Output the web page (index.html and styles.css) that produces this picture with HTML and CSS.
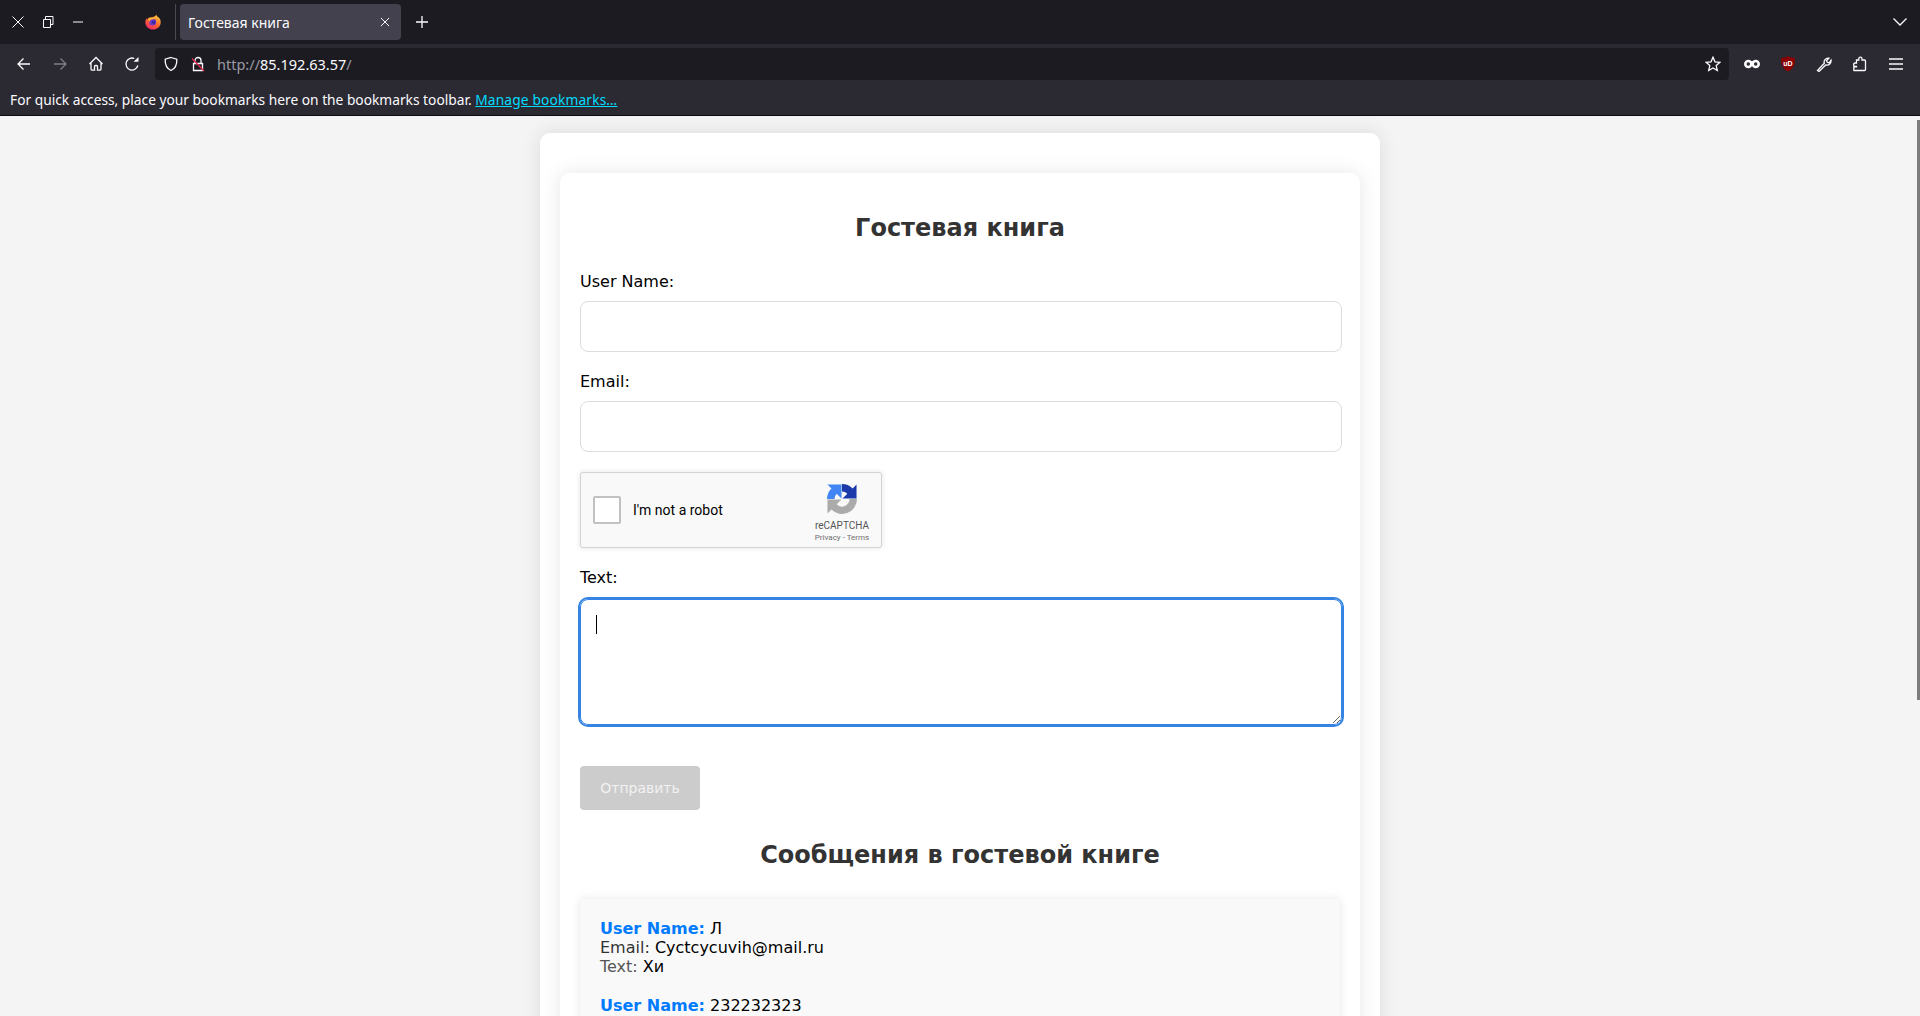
FILE: index.html
```html
<!DOCTYPE html>
<html lang="en">
<head>
  <meta charset="UTF-8">
  <meta name="viewport" content="width=device-width, initial-scale=1.0">
  <title>Гостевая книга</title>
  <link rel="stylesheet" href="styles.css">
</head>
<body>

<!-- browser chrome -->
<div class="tabbar">
  <div class="win-buttons">
    <svg class="icon" viewBox="0 0 16 16"><path d="M2.500 2.500l11 11M13.500 2.500l-11 11"/></svg>
    <svg class="icon" viewBox="0 0 16 16"><path d="M3.500 5.500h7v8h-7zM5.500 5.500v-3h7.500v8h-2.500"/></svg>
    <svg class="icon" viewBox="0 0 16 16"><path d="M3 8h10"/></svg>
  </div>
  <div class="pinned">
    <svg class="fox" viewBox="0 0 16 16">
      <defs>
        <linearGradient id="foxGrad" x1="0.8" y1="0" x2="0.2" y2="1">
          <stop offset="0" stop-color="#ffd23a"/>
          <stop offset="0.5" stop-color="#ff6a2b"/>
          <stop offset="1" stop-color="#f0226e"/>
        </linearGradient>
      </defs>
      <path fill="url(#foxGrad)" d="M11.200 0.600c.2 1.300 1 2 2.200 2.700 1.500 1.100 2.300 2.900 2.300 4.900 0 4.200-3.400 7.300-7.700 7.300S.3 12.300.3 8.200c0-1.500.4-2.800 1.200-4 .1.700.3 1.100.7 1.500C3 3.500 5 2.900 7.200 3.300 9.400 2.900 10.900 2 11.200.6z"/>
      <circle cx="7.700" cy="8" r="3.500" fill="#6d37c8"/>
      <path fill="#ffb52e" d="M3 4.800c2-1.400 5.200-1.500 7.500-.2l-2.300.9C6.500 5 5 6 4.700 7.700 4 6.800 3.400 5.900 3 4.800z"/>
      <circle cx="8.600" cy="8.200" r="1.700" fill="#3a2a9c"/>
    </svg>
  </div>
  <div class="tab">
    <span class="tab-title">Гостевая книга</span>
    <svg class="tab-close" viewBox="0 0 16 16"><path d="M2.500 2.500l11 11M13.500 2.500l-11 11"/></svg>
  </div>
  <svg class="icon new-tab" viewBox="0 0 16 16"><path d="M8 2v12M2 8h12"/></svg>
  <svg class="icon tab-list" viewBox="0 0 16 16"><path d="M1.500 4.500L8 11l6.500-6.500"/></svg>
</div>

<div class="toolbar">
  <div class="nav-buttons">
    <svg class="icon" viewBox="0 0 16 16"><path d="M14 8H2.500M7.500 2.500L2 8l5.500 5.500"/></svg>
    <svg class="icon dim" viewBox="0 0 16 16"><path d="M2 8h11.500M8.500 2.500L14 8l-5.500 5.500"/></svg>
    <svg class="icon" viewBox="0 0 16 16"><path d="M1.500 8L8 1.500 14.500 8M3 6.800v6.100a1.300 1.300 0 0 0 1.300 1.300h2.200V10.500a1 1 0 0 1 1-1h1a1 1 0 0 1 1 1v3.700h2.200a1.300 1.300 0 0 0 1.300-1.300V6.800"/></svg>
    <svg class="icon" viewBox="0 0 16 16"><path d="M13.800 9.500A6 6 0 1 1 10.300 2.500"/><path class="solid" d="M9.500 5.800L14.500 5.800 14.500 1z"/></svg>
  </div>
  <div class="urlbar">
    <svg class="icon" viewBox="0 0 16 16"><path d="M8 1.500l5.800 1.700c.3 5.300-1.400 9.200-5.800 11.300C3.600 12.400 1.900 8.500 2.200 3.200z"/></svg>
    <svg class="icon lock" viewBox="0 0 16 16">
      <path d="M5 7V4.500a3 3 0 0 1 6 0V7M3.500 7.500h9v7h-9z"/>
      <path class="slash" d="M2 2.500l12 12.500"/>
    </svg>
    <div class="url"><span class="url-dim">http://</span>85.192.63.57<span class="url-dim">/</span></div>
    <svg class="icon star" viewBox="0 0 16 16"><path d="M8 1.200l2 4.600 5 .5-3.800 3.300 1.100 4.900L8 12l-4.300 2.500 1.100-4.900L1 6.300l5-.5z"/></svg>
  </div>
  <div class="addons">
    <svg class="icon" viewBox="0 0 16 16">
      <circle class="solid" cx="4.300" cy="8" r="4.300"/>
      <circle class="solid" cx="11.700" cy="8" r="4.300"/>
      <path class="solid" d="M4 5h8v5H4z"/>
      <circle class="hole" cx="4.300" cy="8" r="1.700"/>
      <circle class="hole" cx="11.700" cy="8" r="1.700"/>
    </svg>
    <svg class="ublock" viewBox="0 0 16 16">
      <path fill="#8b0000" d="M8 .5l7 1.800c.2 6-1.800 10.700-7 13.200C2.800 13 .8 8.300 1 2.300z"/>
      <text x="8" y="9.500" class="ublock-text">uD</text>
    </svg>
    <svg class="icon" viewBox="0 0 16 16"><path d="M1.500 14.500L8.300 7.300C7.500 4.700 9.500 1.800 12.800 2.200L10.500 4.700l1 1.800 1.900.2L15 4.200c.5 3-2 5.500-5.300 4.800L3 15.500z"/></svg>
    <svg class="icon" viewBox="0 0 16 16"><path d="M2 14.500h10.500a1 1 0 0 0 1-1V5a1 1 0 0 0-1-1H10V2.800a1.500 1.500 0 0 0-3.200 0V4H4.500v3H3.300a1.700 1.700 0 0 0 0 3.500h1.200v.3H1.800v2.700z"/></svg>
    <svg class="icon" viewBox="0 0 16 16"><path d="M1 3h14M1 8h14M1 13h14"/></svg>
  </div>
</div>

<div class="bookmarks">
  For quick access, place your bookmarks here on the bookmarks toolbar.
  <a class="bookmarks-link" href="#">Manage bookmarks…</a>
</div>

<!-- page -->
<div class="page">
  <div class="scroll-thumb"></div>
  <div class="container">
    <div class="guestbook">
      <h1>Гостевая книга</h1>

      <form class="guest-form">
        <label>User Name:</label>
        <input type="text" class="field">

        <label>Email:</label>
        <input type="text" class="field">

        <div class="captcha">
          <div class="captcha-box"></div>
          <span class="captcha-text">I'm not a robot</span>
          <div class="captcha-brand">
            <svg class="captcha-logo" viewBox="0 0 32 32">
              <path fill="#ababab" d="M.5 16.500H15.500L10.300 21.700A8 8 0 0 0 24 16H32A16 16 0 0 1 4.700 27.300L.5 31.500z"/>
              <path fill="#4285f4" d="M0 16A16 16 0 0 1 4.700 4.700L.5 .5H15.500V15.500L10.300 10.300A8 8 0 0 0 8 16z"/>
              <path fill="#1c3aa9" d="M16 0A16 16 0 0 1 27.300 4.700L31.500 .5V15.500H16.500L21.700 10.300A8 8 0 0 0 16 8z"/>
            </svg>
            <div class="captcha-name">reCAPTCHA</div>
            <div class="captcha-links">Privacy - Terms</div>
          </div>
        </div>

        <label>Text:</label>
        <div class="text-wrap">
          <textarea class="field field-text"></textarea>
          <span class="caret"></span>
        </div>

        <button type="button" class="send" disabled>Отправить</button>
      </form>

      <h2>Сообщения в гостевой книге</h2>

      <div class="messages">
        <div class="message">
          <div><span class="msg-name">User Name:</span> <span class="msg-value">Л</span></div>
          <div>Email: <span class="msg-value">Cyctcycuvih@mail.ru</span></div>
          <div class="msg-text">Text: <span class="msg-value">Хи</span></div>
        </div>
        <div class="message">
          <div><span class="msg-name">User Name:</span> <span class="msg-value">232232323</span></div>
        </div>
      </div>
    </div>
  </div>
</div>

</body>
</html>
```

FILE: styles.css
```css
html, body {
  margin: 0;
  padding: 0;
  height: 1016px;
  overflow: hidden;
}
body {
  font-family: "DejaVu Sans", sans-serif;
  font-size: 16px;
  background-color: #f4f4f4;
  color: #000;
}

/* browser chrome */
.icon {
  width: 16px;
  height: 16px;
  flex: none;
  fill: none;
  stroke: #fbfbfe;
  stroke-width: 1.300;
}
.icon .solid {
  fill: #fbfbfe;
  stroke: none;
}
.icon .hole {
  fill: #2b2a33;
  stroke: none;
}
.dim {
  opacity: 0.4;
}
.tabbar {
  height: 44px;
  background-color: #1c1b22;
  display: flex;
  align-items: center;
  box-sizing: border-box;
  font-family: "Noto Sans", sans-serif;
  color: #fbfbfe;
}
.win-buttons {
  display: flex;
  gap: 14px;
  padding-left: 10px;
  width: 124px;
  box-sizing: border-box;
}
.win-buttons .icon {
  stroke-width: 1;
}
.pinned {
  width: 52px;
  height: 36px;
  display: flex;
  align-items: center;
  padding-left: 21px;
  box-sizing: border-box;
  border-right: 1px solid #4a4953;
  margin-right: 4px;
}
.fox {
  width: 16px;
  height: 16px;
}
.tab {
  width: 221px;
  height: 36px;
  background-color: #42414d;
  border-radius: 4px;
  display: flex;
  align-items: center;
  justify-content: space-between;
  padding: 0 10px 0 8px;
  box-sizing: border-box;
  font-size: 14px;
}
.tab-close {
  width: 12px;
  height: 12px;
  fill: none;
  stroke: #fbfbfe;
  stroke-width: 1.300;
}
.new-tab {
  margin-left: 13px;
}
.tab-list {
  margin-left: auto;
  margin-right: 12px;
}
.toolbar {
  height: 40px;
  background-color: #2b2a33;
  display: flex;
  align-items: center;
}
.nav-buttons {
  display: flex;
  gap: 20px;
  width: 155px;
  padding-left: 16px;
  box-sizing: border-box;
}
.urlbar {
  width: 1574px;
  height: 32px;
  background-color: #1c1b22;
  border-radius: 4px;
  display: flex;
  align-items: center;
  padding: 0 8px;
  box-sizing: border-box;
  font-family: "Noto Sans", sans-serif;
  font-size: 14.500px;
  color: #fbfbfe;
}
.lock {
  margin-left: 11px;
}
.lock .slash {
  stroke: #e22850;
}
.url {
  margin-left: 11px;
  flex: 1;
}
.url-dim {
  color: #9a9aa3;
}
.addons {
  display: flex;
  align-items: center;
  gap: 20px;
  padding-left: 15px;
}
.ublock {
  width: 16px;
  height: 16px;
  flex: none;
}
.ublock-text {
  font-family: "Liberation Sans", sans-serif;
  font-size: 7px;
  font-weight: 700;
  fill: #fff;
  text-anchor: middle;
}
.bookmarks {
  height: 31px;
  background-color: #2b2a33;
  border-bottom: 1px solid #0c0c0d;
  padding-left: 10px;
  font-family: "Noto Sans", sans-serif;
  font-size: 13.750px;
  line-height: 32px;
  color: #fbfbfe;
}
.bookmarks-link {
  color: #00ddff;
  letter-spacing: 0.150px;
}

/* page */
.page {
  height: 900px;
  overflow: hidden;
  position: relative;
  padding-top: 17px;
  box-sizing: border-box;
}
.scroll-thumb {
  position: absolute;
  top: 4px;
  right: 0;
  width: 3px;
  height: 580px;
  background-color: #7d7d7d;
}
.container {
  width: 800px;
  margin: 0 auto;
  padding: 40px 20px 20px;
  background-color: #fff;
  border-radius: 10px;
  box-shadow: 0 0 20px rgba(0, 0, 0, 0.1);
}
.guestbook {
  padding: 20px;
  background-color: #fff;
  border-radius: 10px;
  box-shadow: 0 0 20px rgba(0, 0, 0, 0.1);
}
h1, h2 {
  font-size: 24px;
  text-align: center;
  color: #333;
  margin: 0;
}
h1 {
  margin-top: 21px;
  margin-bottom: 30px;
}
h2 {
  margin-top: 31px;
  margin-bottom: 30px;
}
label {
  display: block;
  margin-bottom: 10px;
}
.field {
  display: block;
  width: calc(100% + 2px);
  height: 51px;
  margin-bottom: 20px;
  padding: 10px;
  box-sizing: border-box;
  border: 1px solid #ddd;
  border-radius: 8px;
  background-color: #fff;
  font-family: inherit;
  font-size: 16px;
}
.field-text {
  height: 126px;
  margin-bottom: 41px;
  border: 1px solid #3584e4;
  outline: 2px solid #3584e4;
}
.text-wrap {
  position: relative;
  padding-top: 2px;
}
.caret {
  position: absolute;
  left: 16px;
  top: 18px;
  width: 1px;
  height: 19px;
  background-color: #000;
}
.captcha {
  width: 302px;
  height: 76px;
  margin-bottom: 20px;
  display: flex;
  align-items: center;
  box-sizing: border-box;
  padding: 0 10px 0 12px;
  background-color: #f9f9f9;
  border: 1px solid #d3d3d3;
  border-radius: 3px;
  box-shadow: 0 0 4px 1px rgba(0, 0, 0, 0.08);
  font-family: Roboto, sans-serif;
}
.captcha-box {
  width: 28px;
  height: 28px;
  flex: none;
  box-sizing: border-box;
  background-color: #fff;
  border: 2px solid #c1c1c1;
  border-radius: 2px;
}
.captcha-text {
  font-size: 14px;
  margin-left: 12px;
  flex: 1;
}
.captcha-brand {
  width: 58px;
  align-self: flex-start;
  padding-top: 11px;
  text-align: center;
  color: #555;
}
.captcha-logo {
  display: block;
  width: 30px;
  height: 30px;
  margin: 0 auto 6px;
}
.captcha-name {
  font-size: 10px;
  line-height: 12px;
}
.captcha-links {
  font-size: 8px;
  line-height: 12px;
  color: #6f6f6f;
}
.send {
  display: block;
  width: 120px;
  height: 44px;
  padding: 0;
  border: none;
  border-radius: 4px;
  background-color: #ccc;
  color: #f2f2f2;
  font-family: inherit;
  font-size: 14px;
}
.messages {
  padding: 20px;
  background-color: #f9f9f9;
  border-radius: 5px;
  box-shadow: 0 0 10px rgba(0, 0, 0, 0.1);
  color: #333;
}
.message + .message {
  margin-top: 20px;
}
.msg-name {
  font-weight: 700;
  color: #007bff;
}
.msg-value {
  color: #000;
}
.msg-text {
  color: #555;
}
```
